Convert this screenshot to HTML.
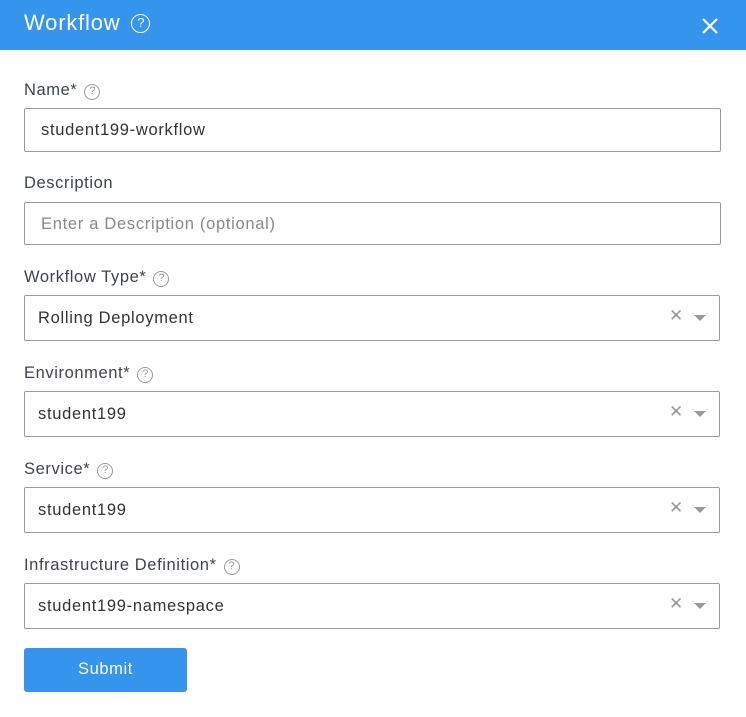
<!DOCTYPE html><html><head><style>
body{margin:0;width:746px;height:717px;background:#fff;font-family:"Liberation Sans",sans-serif;position:relative;overflow:hidden}
.hd{position:absolute;left:0;top:0;width:746px;height:50px;background:#3594ec;color:#fff}
.hd .t{position:absolute;left:24px;top:10px;font-size:22px;letter-spacing:0.8px}
.q{display:inline-block;border:1.5px solid currentColor;border-radius:50%;text-align:center;box-sizing:border-box;letter-spacing:0}
.lbl{position:absolute;left:24px;font-size:16.5px;color:#3d4350;letter-spacing:0.6px}
.lbl .q{width:16px;height:16px;font-size:11px;line-height:13px;color:#999;border-width:1px;margin-left:7px;vertical-align:1px}
.in{position:absolute;left:24px;width:697px;border:1px solid #9a9a9a;border-radius:2px;box-sizing:border-box;font-size:16.5px;color:#333;letter-spacing:0.7px}
.x{position:absolute;right:35px;color:#999;font-size:17px;font-weight:300}
.ar{position:absolute;right:13px;width:0;height:0;border-left:6px solid transparent;border-right:6px solid transparent;border-top:6px solid #999}
.btn{position:absolute;left:24px;top:648px;width:163px;height:44px;background:#3594ec;border-radius:3px;color:#fff;font-size:16.5px;text-align:center;line-height:43px;letter-spacing:0.6px}
</style></head><body>
<div class="hd"><span class="t">Workflow <span class="q" style="width:19px;height:19px;font-size:13px;line-height:16px;vertical-align:3px;margin-left:4px">?</span></span>
<svg style="position:absolute;left:701px;top:17px" width="18" height="18"><path d="M2 2L16 16M16 2L2 16" stroke="#fff" stroke-width="2.2"/></svg></div>
<div class="lbl" style="top:81px">Name*<span class="q">?</span></div>
<div class="in" style="top:108px;height:44px;padding:12px 0 0 16px">student199-workflow</div>
<div class="lbl" style="top:174px">Description</div>
<div class="in" style="top:202px;height:43px;padding:12px 0 0 16px;color:#888">Enter a Description (optional)</div>
<div class="lbl" style="top:268px">Workflow Type*<span class="q">?</span></div>
<div class="in" style="top:295px;height:46px;width:696px;padding:13px 0 0 13px">Rolling Deployment<span class="x" style="top:10px">✕</span><span class="ar" style="top:19px"></span></div>
<div class="lbl" style="top:364px">Environment*<span class="q">?</span></div>
<div class="in" style="top:391px;height:46px;width:696px;padding:13px 0 0 13px">student199<span class="x" style="top:10px">✕</span><span class="ar" style="top:19px"></span></div>
<div class="lbl" style="top:460px">Service*<span class="q">?</span></div>
<div class="in" style="top:487px;height:46px;width:696px;padding:13px 0 0 13px">student199<span class="x" style="top:10px">✕</span><span class="ar" style="top:19px"></span></div>
<div class="lbl" style="top:556px">Infrastructure Definition*<span class="q">?</span></div>
<div class="in" style="top:583px;height:46px;width:696px;padding:13px 0 0 13px">student199-namespace<span class="x" style="top:10px">✕</span><span class="ar" style="top:19px"></span></div>
<div class="btn">Submit</div>
</body></html>
